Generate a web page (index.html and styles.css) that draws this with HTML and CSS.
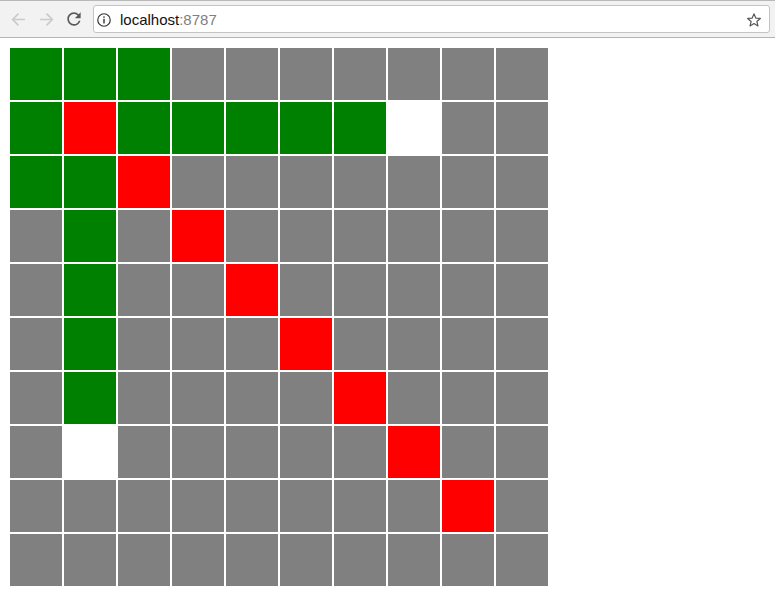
FILE: index.html
```html
<!DOCTYPE html>
<html>
<head>
<meta charset="utf-8">
<link rel="stylesheet" href="styles.css">
</head>
<body>
<div class="toolbar">
  <div class="nav">
    <span class="btn disabled">
      <svg width="17" height="17" viewBox="0 0 16 16"><path d="M14 8H2.5M8 2.5L2.5 8 8 13.5" fill="none" stroke="currentColor" stroke-width="1.5"/></svg>
    </span>
    <span class="btn disabled">
      <svg width="17" height="17" viewBox="0 0 16 16"><path d="M2 8h11.5M8 2.5L13.5 8 8 13.5" fill="none" stroke="currentColor" stroke-width="1.5"/></svg>
    </span>
    <span class="btn">
      <svg width="20" height="20" viewBox="0 0 24 24"><path d="M17.65 6.35A7.958 7.958 0 0 0 12 4c-4.42 0-7.99 3.58-7.99 8s3.57 8 7.990 8c3.73 0 6.84-2.55 7.73-6h-2.080A5.990 5.990 0 0 1 12 18c-3.31 0-6-2.69-6-6s2.69-6 6-6c1.66 0 3.14.69 4.22 1.78L13 11h7V4l-2.35 2.35z" fill="currentColor"/></svg>
    </span>
  </div>
  <div class="omnibox">
    <svg class="info" width="14" height="14" viewBox="0 0 13 13"><circle cx="6.5" cy="6.5" r="5.8" fill="none" stroke="#333" stroke-width="1.1"/><rect x="5.85" y="5.4" width="1.3" height="4.3" fill="#333"/><rect x="5.85" y="3.1" width="1.3" height="1.3" fill="#333"/></svg>
    <span class="url">localhost<span class="port">:8787</span></span>
    <svg class="star" width="16" height="16" viewBox="0 0 24 24"><path d="M12 2.8l2.7 6.3 6.8.6-5.2 4.5 1.6 6.7L12 17.3l-5.9 3.6 1.6-6.7-5.2-4.5 6.8-.6z" fill="none" stroke="#555" stroke-width="1.8" stroke-linejoin="round"/></svg>
  </div>
</div>
<div class="page">
  <div class="grid">
    <div class="c g"></div><div class="c g"></div><div class="c g"></div><div class="c"></div><div class="c"></div><div class="c"></div><div class="c"></div><div class="c"></div><div class="c"></div><div class="c"></div>
    <div class="c g"></div><div class="c r"></div><div class="c g"></div><div class="c g"></div><div class="c g"></div><div class="c g"></div><div class="c g"></div><div class="c w"></div><div class="c"></div><div class="c"></div>
    <div class="c g"></div><div class="c g"></div><div class="c r"></div><div class="c"></div><div class="c"></div><div class="c"></div><div class="c"></div><div class="c"></div><div class="c"></div><div class="c"></div>
    <div class="c"></div><div class="c g"></div><div class="c"></div><div class="c r"></div><div class="c"></div><div class="c"></div><div class="c"></div><div class="c"></div><div class="c"></div><div class="c"></div>
    <div class="c"></div><div class="c g"></div><div class="c"></div><div class="c"></div><div class="c r"></div><div class="c"></div><div class="c"></div><div class="c"></div><div class="c"></div><div class="c"></div>
    <div class="c"></div><div class="c g"></div><div class="c"></div><div class="c"></div><div class="c"></div><div class="c r"></div><div class="c"></div><div class="c"></div><div class="c"></div><div class="c"></div>
    <div class="c"></div><div class="c g"></div><div class="c"></div><div class="c"></div><div class="c"></div><div class="c"></div><div class="c r"></div><div class="c"></div><div class="c"></div><div class="c"></div>
    <div class="c"></div><div class="c w"></div><div class="c"></div><div class="c"></div><div class="c"></div><div class="c"></div><div class="c"></div><div class="c r"></div><div class="c"></div><div class="c"></div>
    <div class="c"></div><div class="c"></div><div class="c"></div><div class="c"></div><div class="c"></div><div class="c"></div><div class="c"></div><div class="c"></div><div class="c r"></div><div class="c"></div>
    <div class="c"></div><div class="c"></div><div class="c"></div><div class="c"></div><div class="c"></div><div class="c"></div><div class="c"></div><div class="c"></div><div class="c"></div><div class="c"></div>
  </div>
</div>
</body>
</html>
```

FILE: styles.css
```css
html, body {
  margin: 0;
  padding: 0;
  background: #fff;
  font-family: "Liberation Sans", Arial, sans-serif;
}
.toolbar {
  box-sizing: border-box;
  height: 38px;
  background: #f2f2f2;
  border-top: 1px solid #b9b9b9;
  border-bottom: 1px solid #b4b4b4;
  display: flex;
  align-items: flex-start;
  padding: 4px 5px 0 4px;
}
.nav {
  display: flex;
  height: 28px;
  align-items: center;
}
.btn {
  width: 28px;
  height: 28px;
  display: flex;
  align-items: center;
  justify-content: center;
  color: #5a5a5a;
}
.btn.disabled {
  color: #cacaca;
}
.omnibox {
  box-sizing: border-box;
  flex: 1;
  height: 28px;
  margin-left: 5px;
  background: #fff;
  border: 1px solid #c3c3c3;
  border-radius: 3px;
  display: flex;
  align-items: center;
  padding: 0 7px 0 3px;
}
.info {
  margin-top: 1px;
}
.url {
  margin-left: 9px;
  font-size: 15px;
  color: #111;
  flex: 1;
}
.port {
  color: #808080;
}
.star {
  margin-top: 1px;
}
.page {
  padding: 10px;
}
.grid {
  display: grid;
  grid-template-columns: repeat(10, 52px);
  grid-auto-rows: 52px;
  gap: 2px;
}
.c {
  background: #808080;
}
.c.g {
  background: #008000;
}
.c.r {
  background: #ff0000;
}
.c.w {
  background: #ffffff;
}
```
